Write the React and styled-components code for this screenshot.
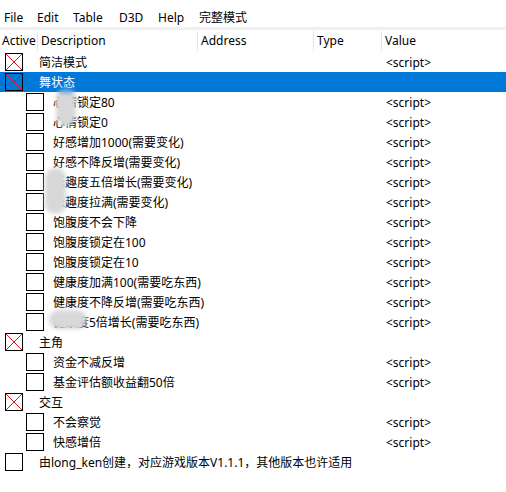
import styled, { createGlobalStyle } from "styled-components";

const Global = createGlobalStyle`
  html, body { margin: 0; padding: 0; background: #fff; }
  body {
    font-family: "Noto Sans", "Noto Sans CJK SC", sans-serif;
    font-size: 12px;
    color: #000;
  }
`;

const Window = styled.div`
  position: relative;
  width: 506px;
  height: 492px;
  overflow: hidden;
  background: #fff;
`;

const MenuBar = styled.div`
  display: flex;
  height: 27px;
  padding: 8px 0 0 4px;
  box-sizing: border-box;
`;

const MenuItem = styled.span`
  width: ${(p) => p.w}px;
  line-height: 19px;
`;

const Strip = styled.div`
  height: 3px;
  background: #f0f0f0;
`;

const Header = styled.div`
  display: grid;
  grid-template-columns: 38px 160px 116px 68px 1fr;
  height: 22px;
`;

const HeadCell = styled.div`
  padding-left: ${(p) => (p.first ? 2 : 3)}px;
  border-right: ${(p) => (p.last ? "none" : "1px solid #e5e5e5")};
  margin: 1px 0;
  line-height: 20px;
`;

const Row = styled.div`
  display: grid;
  grid-template-columns: 386px 1fr;
  height: 20px;
  align-items: center;
  background: ${(p) => (p.selected ? "#0078d7" : "transparent")};
  color: ${(p) => (p.selected ? "#fff" : "#000")};
`;

const Desc = styled.div`
  display: flex;
  align-items: center;
  padding-left: ${(p) => (p.child ? 26 : 5)}px;
  white-space: nowrap;
`;

const Box = styled.div`
  width: 16px;
  height: 16px;
  border: 1px solid #000;
  background: ${(p) => (p.clear ? "transparent" : "#fff")};
  margin-right: ${(p) => (p.child ? 9 : 16)}px;
  flex-shrink: 0;
  display: flex;
`;

const Value = styled.div`
  white-space: nowrap;
`;

const Blur = styled.div`
  position: absolute;
  border-radius: 10px;
  background: ${(p) => (p.blue ? "linear-gradient(#5a9fdc 0 12%, #d8d8d8 12%)" : "#d8d8d8")};
  filter: blur(2px);
`;

const Cross = () => (
  <svg width="16" height="16" viewBox="0 0 16 16">
    <path d="M0 0L16 16M16 0L0 16" stroke="#e81123" strokeWidth="1" />
  </svg>
);

const rows = [
  { text: "简洁模式", group: true, checked: true, value: "<script>" },
  { text: "舞状态", group: true, checked: true, selected: true, value: "" },
  { text: "心情锁定80", value: "<script>" },
  { text: "心情锁定0", value: "<script>" },
  { text: "好感增加1000(需要变化)", value: "<script>" },
  { text: "好感不降反增(需要变化)", value: "<script>" },
  { text: "乐趣度五倍增长(需要变化)", value: "<script>" },
  { text: "乐趣度拉满(需要变化)", value: "<script>" },
  { text: "饱腹度不会下降", value: "<script>" },
  { text: "饱腹度锁定在100", value: "<script>" },
  { text: "饱腹度锁定在10", value: "<script>" },
  { text: "健康度加满100(需要吃东西)", value: "<script>" },
  { text: "健康度不降反增(需要吃东西)", value: "<script>" },
  { text: "健康度5倍增长(需要吃东西)", value: "<script>" },
  { text: "主角", group: true, checked: true, value: "" },
  { text: "资金不减反增", value: "<script>" },
  { text: "基金评估额收益翻50倍", value: "<script>" },
  { text: "交互", group: true, checked: true, value: "" },
  { text: "不会察觉", value: "<script>" },
  { text: "快感增倍", value: "<script>" },
  { text: "由long_ken创建，对应游戏版本V1.1.1，其他版本也许适用", group: true, value: "" },
];

const menus = [
  ["File", 33],
  ["Edit", 36],
  ["Table", 46],
  ["D3D", 39],
  ["Help", 41],
  ["完整模式", 60],
];

export default function App() {
  return (
    <Window>
      <Global />
      <MenuBar>
        {menus.map(([m, w]) => (
          <MenuItem key={m} w={w}>{m}</MenuItem>
        ))}
      </MenuBar>
      <Strip />
      <Header>
        <HeadCell first>Active</HeadCell>
        <HeadCell>Description</HeadCell>
        <HeadCell>Address</HeadCell>
        <HeadCell>Type</HeadCell>
        <HeadCell last>Value</HeadCell>
      </Header>
      {rows.map((r, i) => (
        <Row key={i} selected={r.selected}>
          <Desc child={!r.group}>
            <Box child={!r.group} clear={r.selected}>
              {r.checked && <Cross />}
            </Box>
            {r.text}
          </Desc>
          <Value>{r.value}</Value>
        </Row>
      ))}
      <Blur blue style={{ left: 56, top: 88, width: 20, height: 38 }} />
      <Blur style={{ left: 45, top: 168, width: 21, height: 46 }} />
      <Blur style={{ left: 49, top: 310, width: 38, height: 19 }} />
    </Window>
  );
}
